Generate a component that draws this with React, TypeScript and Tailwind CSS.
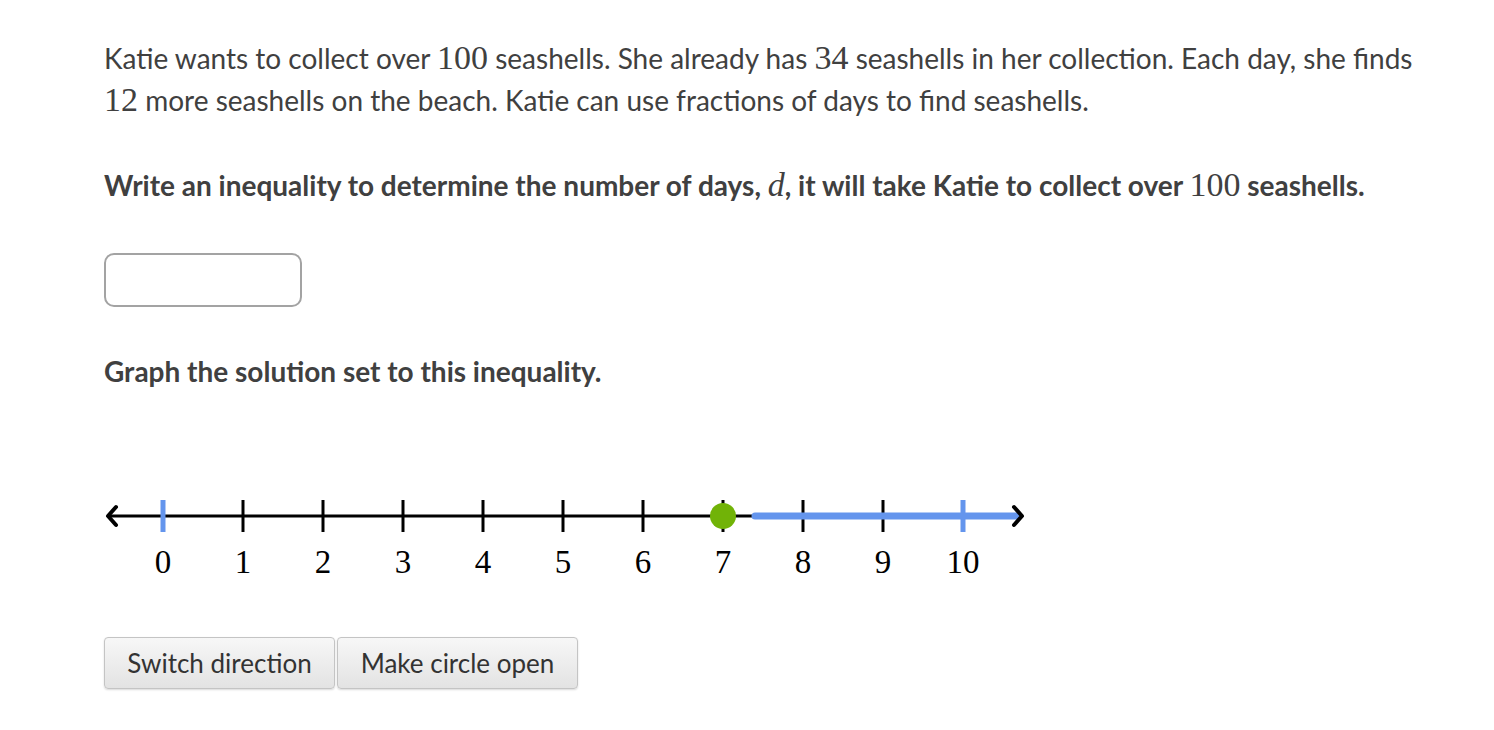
const math = "font-['Liberation_Serif',serif] text-[34px] leading-none";

function NumberLine() {
  const ticks = Array.from({ length: 11 }, (_, i) => i);
  return (
    <svg width="940" height="100" viewBox="0 0 940 100" className="block">
      <line x1="8" y1="26" x2="652" y2="26" stroke="#000" strokeWidth="3" />
      <path d="M16 17 L8 26 L16 35" fill="none" stroke="#000" strokeWidth="4" strokeLinecap="round" strokeLinejoin="round" />
      {ticks.map((i) =>
        i === 0 || i === 10 ? null : (
          <line key={i} x1={63 + 80 * i} y1="10" x2={63 + 80 * i} y2="42" stroke="#000" strokeWidth="3" />
        )
      )}
      <line x1="655" y1="26" x2="919" y2="26" stroke="#6495ED" strokeWidth="7" strokeLinecap="round" />
      <path d="M914 17 L922 26 L914 35" fill="none" stroke="#000" strokeWidth="4" strokeLinecap="round" strokeLinejoin="round" />
      <line x1="63" y1="10" x2="63" y2="42" stroke="#6495ED" strokeWidth="5" />
      <line x1="863" y1="10" x2="863" y2="42" stroke="#6495ED" strokeWidth="5" />
      <circle cx="623" cy="26" r="13" fill="#71B307" />
      {ticks.map((i) => (
        <text
          key={i}
          x={63 + 80 * i}
          y="83"
          textAnchor="middle"
          fontFamily="'Liberation Serif', serif"
          fontSize="33"
          fill="#000"
        >
          {i}
        </text>
      ))}
    </svg>
  );
}

export default function App() {
  return (
    <div className="min-h-screen bg-white pl-[104px] pt-[37px] font-['Lato',sans-serif] text-[28px] leading-[42px] text-[#404040]">
      <p className="w-[1330px]">
        Katie wants to collect over <span className={math}>100</span> seashells. She already has{' '}
        <span className={math}>34</span> seashells in her collection. Each day, she finds{' '}
        <span className={math}>12</span> more seashells on the beach. Katie can use fractions of days to find seashells.
      </p>

      <p className="mt-[43px] font-bold">
        Write an inequality to determine the number of days, <span className={`${math} font-normal italic`}>d</span>, it
        will take Katie to collect over <span className={`${math} font-normal`}>100</span> seashells.
      </p>

      <div className="mt-[47px] h-[54px] w-[198px] rounded-[10px] border-2 border-[#a3a3a3] bg-white" />

      <p className="mt-[43px] font-bold">Graph the solution set to this inequality.</p>

      <div className="-ml-[4px] mt-[98px]">
        <NumberLine />
      </div>

      <div className="mt-[47px] flex gap-[2px]">
        <button className="h-[52px] w-[231px] rounded-[4px] border border-[#c4c4c4] bg-gradient-to-b from-[#f7f7f7] to-[#e3e3e3] text-[26px] text-[#333] shadow-[0_1px_2px_rgba(0,0,0,0.15)]">
          Switch direction
        </button>
        <button className="h-[52px] w-[241px] rounded-[4px] border border-[#c4c4c4] bg-gradient-to-b from-[#f7f7f7] to-[#e3e3e3] text-[26px] text-[#333] shadow-[0_1px_2px_rgba(0,0,0,0.15)]">
          Make circle open
        </button>
      </div>
    </div>
  );
}
